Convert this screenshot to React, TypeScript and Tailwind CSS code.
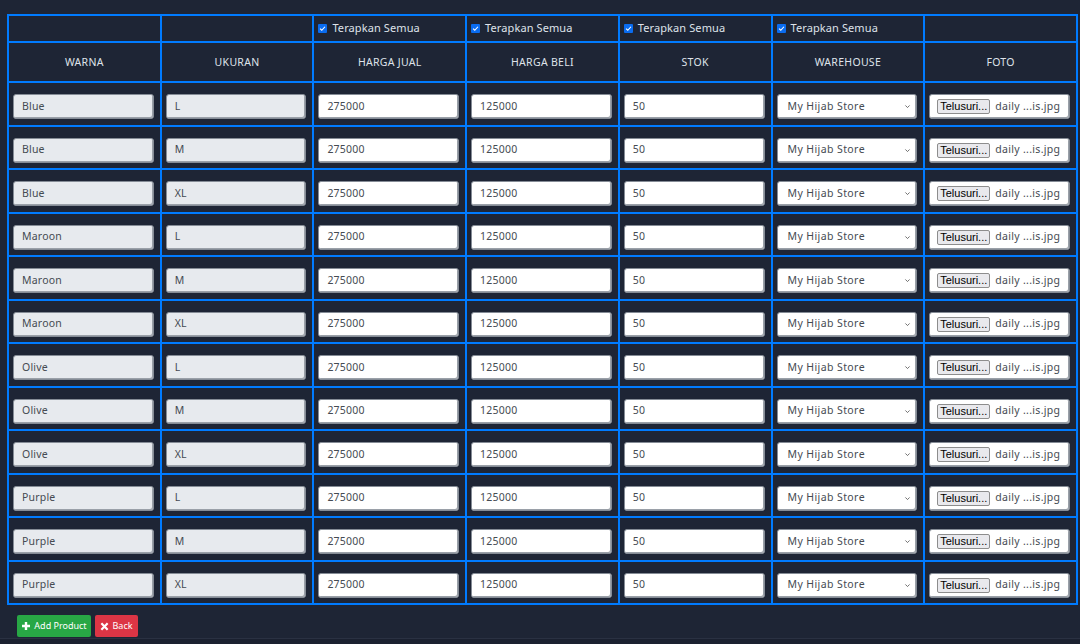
import React from "react";

const colors = ["Blue", "Maroon", "Olive", "Purple"];
const sizes = ["L", "M", "XL"];

const rows = colors.flatMap((c) => sizes.map((s) => ({ color: c, size: s })));

const font = { fontFamily: '"Noto Sans", "Open Sans", sans-serif' };

const cellCls = "border-2 border-[#007bff] px-[4px] align-middle";
const bodyCell = "border-2 border-[#007bff] pl-[4px] pr-[6px] pt-[6px] align-middle";

const ApplyAll = () => (
  <label className="flex items-center gap-[5px] text-[11px] font-normal text-[#dfe3ea] tracking-[0.1px]">
    <span className="w-[9px] h-[9px] bg-[#0a6cf0] rounded-[1px] flex items-center justify-center">
      <svg viewBox="0 0 10 10" className="w-[7px] h-[7px]">
        <path d="M1.5 5.2 L4 7.5 L8.5 2.5" stroke="white" strokeWidth="1.6" fill="none" />
      </svg>
    </span>
    Terapkan Semua
  </label>
);

const Field = ({ value, disabled }: { value: string; disabled?: boolean }) => (
  <div
    className={`h-[25px] flex items-center px-[8px] rounded-[3px] border border-[#858c96] shadow-[inset_-1px_-1px_0_#9aa0a8] text-[10.5px] text-[#454b52] tracking-[0.2px] ${
      disabled ? "bg-[#e7eaee]" : "bg-white"
    }`}
  >
    {value}
  </div>
);

const Select = () => (
  <div className="h-[25px] flex items-center justify-between pl-[10px] pr-[5px] rounded-[3px] border border-[#858c96] shadow-[inset_-1px_-1px_0_#9aa0a8] bg-white text-[10.5px] text-[#454b52] tracking-[0.4px]">
    <span>My Hijab Store</span>
    <svg viewBox="0 0 10 10" className="w-[7px] h-[7px]">
      <path d="M2 3.5 L5 6.5 L8 3.5" stroke="#555" strokeWidth="1.2" fill="none" />
    </svg>
  </div>
);

const FileField = () => (
  <div className="h-[25px] flex items-center gap-[5px] px-[7px] rounded-[3px] border border-[#858c96] shadow-[inset_-1px_-1px_0_#9aa0a8] bg-white text-[10.5px] text-[#454b52] tracking-[0.3px]">
    <span
      className="h-[15px] px-[2px] flex items-center border border-[#8d8d8d] rounded-[2px] bg-[#e9e9ed] text-[11px] text-black leading-none tracking-normal"
      style={{ fontFamily: '"Liberation Sans", Arial, sans-serif' }}
    >
      Telusuri...
    </span>
    <span>daily ...is.jpg</span>
  </div>
);

export default function App() {
  return (
    <div className="w-[1080px] h-[644px] bg-[#1e2535] overflow-hidden flex flex-col" style={font}>
      <div className="pt-[14px] pl-[7px] pr-[2px]">
        <table className="w-[1071px] border-collapse table-fixed">
          <thead>
            <tr className="h-[27px]">
              <th className={cellCls}></th>
              <th className={cellCls}></th>
              <th className={cellCls}><ApplyAll /></th>
              <th className={cellCls}><ApplyAll /></th>
              <th className={cellCls}><ApplyAll /></th>
              <th className={cellCls}><ApplyAll /></th>
              <th className={cellCls}></th>
            </tr>
            <tr className="h-[40px]">
              {["WARNA", "UKURAN", "HARGA JUAL", "HARGA BELI", "STOK", "WAREHOUSE", "FOTO"].map((h) => (
                <th key={h} className={`${cellCls} pt-[2px] text-center text-[10.5px] font-normal text-[#dfe3ea] tracking-[0.3px]`}>
                  {h}
                </th>
              ))}
            </tr>
          </thead>
          <tbody>
            {rows.map((r, i) => (
              <tr key={i} className="h-[43.5px]">
                <td className={bodyCell}><Field value={r.color} disabled /></td>
                <td className={bodyCell}><Field value={r.size} disabled /></td>
                <td className={bodyCell}><Field value="275000" /></td>
                <td className={bodyCell}><Field value="125000" /></td>
                <td className={bodyCell}><Field value="50" /></td>
                <td className={bodyCell}><Select /></td>
                <td className={bodyCell}><FileField /></td>
              </tr>
            ))}
          </tbody>
        </table>
      </div>
      <div className="flex gap-[4px] pl-[17px] pt-[10px]">
        <button className="h-[22px] w-[74px] flex items-center justify-center gap-[3px] bg-[#28a745] rounded-[2px] text-white text-[9px]">
          <svg viewBox="0 0 10 10" className="w-[10px] h-[10px]">
            <path d="M5 1 V9 M1 5 H9" stroke="white" strokeWidth="2.4" />
          </svg>
          Add Product
        </button>
        <button className="h-[22px] w-[43px] flex items-center justify-center gap-[3px] bg-[#dc3545] rounded-[2px] text-white text-[9px]">
          <svg viewBox="0 0 10 10" className="w-[9px] h-[9px]">
            <path d="M1.5 1.5 L8.5 8.5 M8.5 1.5 L1.5 8.5" stroke="white" strokeWidth="2.4" />
          </svg>
          Back
        </button>
      </div>
      <div className="mt-auto h-[6px] border-t border-[#2a3142] bg-[#1b2130]" />
    </div>
  );
}
